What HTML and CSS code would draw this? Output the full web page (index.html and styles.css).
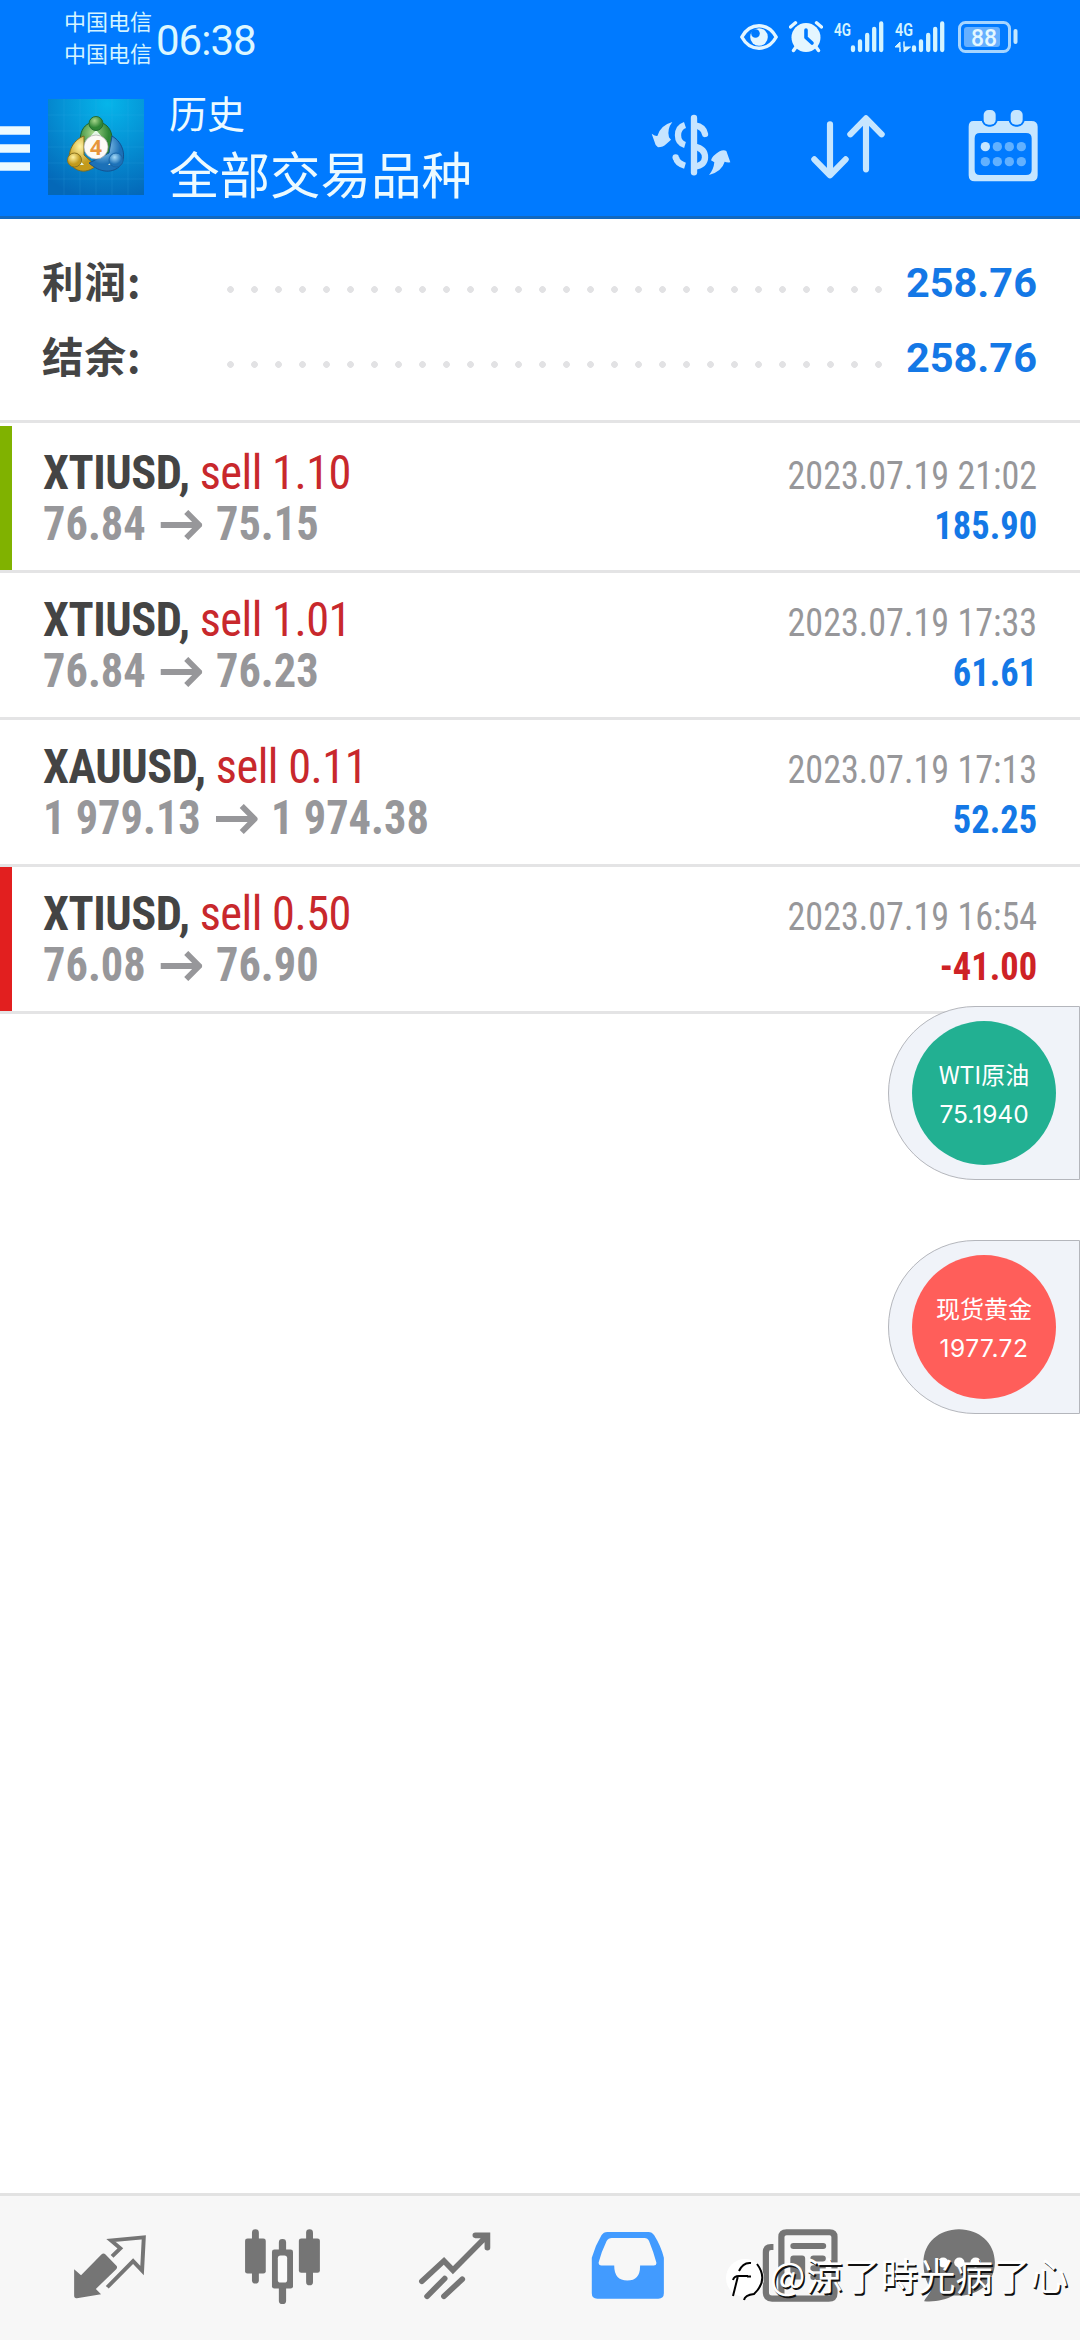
FILE: index.html
```html
<!DOCTYPE html>
<html lang="zh-CN">
<head>
<meta charset="utf-8">
<title>历史</title>
<link rel="stylesheet" href="styles.css">
</head>
<body>
<div class="app">
  <header class="header">
    <div class="status">
      <div class="carriers"><span>中国电信</span><span>中国电信</span></div>
      <div class="clock">06:38</div>
      <div class="status-icons">
        <svg class="eye" width="38" height="26" viewBox="0 0 38 26"><path d="M1.8 13C10-2 28-2 36.200 13C28 28 10 28 1.800 13Z" fill="none" stroke="#e4f6ff" stroke-width="3.400" stroke-linejoin="round"/><circle cx="19" cy="13" r="8.800" fill="#e4f6ff"/><circle cx="15.500" cy="9.500" r="4.300" fill="#007aff"/></svg>
        <svg class="alarm" width="34" height="32" viewBox="0 0 34 32"><circle cx="17" cy="16.500" r="14.500" fill="#e4f6ff"/><path d="M1.500 6L6.500 1.800M32.500 6L27.500 1.800M7 26L4.500 29.500M27 26l2.500 3.500" stroke="#e4f6ff" stroke-width="3.400" stroke-linecap="round"/><path d="M17 9v7.500l6 5.500" fill="none" stroke="#007aff" stroke-width="3.600" stroke-linecap="round" stroke-linejoin="round"/></svg>
        <svg class="signal" width="50" height="32" viewBox="0 0 50 32"><text class="net" x="0" y="14.500" textLength="17" lengthAdjust="spacingAndGlyphs">4G</text><path d="M19 26.500v2.500M26 20.500v8.500M33.200 14v15M40.200 7.800v21.200M47.200 2.500v26.500" stroke="#d4f4ff" stroke-width="4.300" stroke-linecap="round"/></svg>
        <svg class="signal" width="50" height="32" viewBox="0 0 50 32"><text class="net" x="0" y="14.500" textLength="18" lengthAdjust="spacingAndGlyphs">4G</text><path d="M5 31V21L0 26H5ZM9 20.500V31L15.500 26H9Z" fill="#d4f4ff" stroke="#d4f4ff" stroke-width="1"/><path d="M19 26.500v2.500M26 20.500v8.500M33.200 14v15M40.200 7.800v21.200M47.200 2.500v26.500" stroke="#d4f4ff" stroke-width="4.300" stroke-linecap="round"/></svg>
        <svg class="battery" width="60" height="32" viewBox="0 0 60 32"><rect x="1.500" y="1.500" width="50" height="29" rx="6" fill="none" stroke="#a6d5ff" stroke-width="3"/><rect x="6" y="6" width="36" height="20" rx="3" fill="#66b0ff"/><path d="M57.500 10v11" stroke="#c4e8ff" stroke-width="4" stroke-linecap="round"/><text class="level" x="13" y="25" textLength="26" lengthAdjust="spacingAndGlyphs">88</text></svg>
      </div>
    </div>
    <div class="toolbar">
      <svg class="menu" width="30" height="46" viewBox="0 0 30 46"><path d="M0 4.500h30M0 22.500h30M0 40.500h30" stroke="#ecfaff" stroke-width="8.500"/></svg>
      <svg class="logo" width="96" height="96" viewBox="0 0 96 96">
        <defs>
          <radialGradient id="bg" cx=".62" cy=".05" r="1"><stop offset="0" stop-color="#06b5ea"/><stop offset=".5" stop-color="#0590d4"/><stop offset="1" stop-color="#0468b8"/></radialGradient>
          <radialGradient id="gr" cx=".4" cy=".3"><stop offset="0" stop-color="#a5d68a"/><stop offset="1" stop-color="#2f8636"/></radialGradient>
          <radialGradient id="ye" cx=".4" cy=".3"><stop offset="0" stop-color="#fff2a0"/><stop offset="1" stop-color="#c39a1c"/></radialGradient>
          <radialGradient id="bl" cx=".4" cy=".3"><stop offset="0" stop-color="#a8dcf8"/><stop offset="1" stop-color="#1c71b8"/></radialGradient>
        </defs>
        <rect width="96" height="96" fill="url(#bg)"/>
        <path d="M16 0v96M32 0v96M48 0v96M64 0v96M80 0v96M0 16h96M0 32h96M0 48h96M0 64h96M0 80h96" stroke="#4cc0ee" stroke-opacity=".14"/>
        <path d="M33 49C30 33 36 23 48 23s19 10 15 27l-6 10-8-18z" fill="url(#gr)" stroke="#1c6430"/>
        <path d="M36 37C24 41 18 56 23 66c8 9 18 7 25 1L36 56z" fill="url(#ye)" stroke="#7e6c1e"/>
        <path d="M64 37c12 7 14 21 9 29-8 9-21 8-32-2l20-10z" fill="url(#bl)" stroke="#135190"/>
        <path d="M48 31l7 8H41zM28 57l8 9h-7zM69 57l-9 9 8-1z" fill="#e4f7e6"/>
        <circle cx="48" cy="24.500" r="7" fill="url(#gr)" stroke="#246c30"/>
        <circle cx="26.500" cy="61" r="7" fill="url(#ye)" stroke="#8a7420"/>
        <circle cx="68" cy="61" r="7" fill="url(#bl)" stroke="#1a65a6"/>
        <circle cx="48" cy="48" r="12" fill="#fcfaf7" stroke="#aaa" stroke-width=".7"/>
        <text class="logo-digit" x="48" y="56" text-anchor="middle">4</text>
      </svg>
      <div class="titles"><div class="title">历史</div><div class="subtitle">全部交易品种</div></div>
      <div class="actions">
        <svg class="act-currency" width="80" height="64" viewBox="30 26 240 192">
          <g fill="#c6e4ff"><path d="M94 50Q77 72 84 96L90 103Q86 107 75 117Q67 126 51 126L44 119L32 85Q43 93 49 92Q58 60 94 50Z"/><path d="M204 209Q218 193 220 171L210 165Q214 151 236 138Q248 132 256 137L268 171Q257 172 251 169Q243 198 204 209Z"/></g>
          <g fill="none" stroke="#c6e4ff" stroke-width="19"><path d="M132 59Q111 66 111 90Q111 113 132 119"/><path d="M105 157Q108 174 132 181"/><path d="M159 38V201" stroke-linecap="round"/><path d="M162 60Q188 64 192 86M160 124Q193 130 192 157Q191 180 160 184" stroke-linecap="round"/></g>
          <circle cx="104" cy="156" r="9.500" fill="#c6e4ff"/>
        </svg>
        <svg class="act-sort" width="74" height="66" viewBox="627 341 222 198"><path d="M684 372V522M637 477L684 525L731 477M792 507V356M745 402L792 354L839 402" fill="none" stroke="#c6e6ff" stroke-width="18.500" stroke-linecap="round" stroke-linejoin="round"/></svg>
        <svg class="act-calendar" width="70" height="73" viewBox="1102 327 210 219"><path fill-rule="evenodd" d="M1118 363h174q19 0 19 17v146q0 18-19 18h-170q-18 0-18-18V380q0-17 14-17zM1138 399q-16 0-16 16v94q0 16 16 16h138q17 0 17-16v-94q0-16-17-16z" fill="#c6e6ff"/><rect x="1149" y="330" width="36" height="44" rx="15" fill="#c6e6ff" stroke="#007aff" stroke-width="12" paint-order="stroke"/><rect x="1230" y="330" width="36" height="44" rx="15" fill="#c6e6ff" stroke="#007aff" stroke-width="12" paint-order="stroke"/><g fill="#62b1ff"><circle cx="1154" cy="440" r="14" fill="#c6e6ff"/><circle cx="1190" cy="440" r="14"/><circle cx="1226" cy="440" r="14"/><circle cx="1262" cy="440" r="14"/><circle cx="1154" cy="485" r="14"/><circle cx="1190" cy="485" r="14"/><circle cx="1226" cy="485" r="14"/><circle cx="1262" cy="485" r="14"/></g></svg>
      </div>
    </div>
  </header>

  <section class="summary">
    <div class="sum-row"><span class="sum-label">利润:</span><span class="dots"></span><span class="sum-value">258.76</span></div>
    <div class="sum-row"><span class="sum-label">结余:</span><span class="dots"></span><span class="sum-value">258.76</span></div>
  </section>

  <main class="deals">
    <article class="deal deal-first take">
      <div class="left"><div class="name"><b>XTIUSD,</b> <span>sell 1.10</span></div><div class="prices">76.84<svg class="arrow" width="45" height="30" viewBox="0 0 42 30" preserveAspectRatio="none"><path d="M0 15H38M26 2L39 15L26 28" fill="none" stroke="#97979a" stroke-width="5.800"/></svg>75.15</div></div>
      <div class="right"><div class="date">2023.07.19 21:02</div><div class="profit">185.90</div></div>
    </article>
    <article class="deal">
      <div class="left"><div class="name"><b>XTIUSD,</b> <span>sell 1.01</span></div><div class="prices">76.84<svg class="arrow" width="45" height="30" viewBox="0 0 42 30" preserveAspectRatio="none"><path d="M0 15H38M26 2L39 15L26 28" fill="none" stroke="#97979a" stroke-width="5.800"/></svg>76.23</div></div>
      <div class="right"><div class="date">2023.07.19 17:33</div><div class="profit">61.61</div></div>
    </article>
    <article class="deal">
      <div class="left"><div class="name"><b>XAUUSD,</b> <span>sell 0.11</span></div><div class="prices">1 979.13<svg class="arrow" width="45" height="30" viewBox="0 0 42 30" preserveAspectRatio="none"><path d="M0 15H38M26 2L39 15L26 28" fill="none" stroke="#97979a" stroke-width="5.800"/></svg>1 974.38</div></div>
      <div class="right"><div class="date">2023.07.19 17:13</div><div class="profit">52.25</div></div>
    </article>
    <article class="deal stop">
      <div class="left"><div class="name"><b>XTIUSD,</b> <span>sell 0.50</span></div><div class="prices">76.08<svg class="arrow" width="45" height="30" viewBox="0 0 42 30" preserveAspectRatio="none"><path d="M0 15H38M26 2L39 15L26 28" fill="none" stroke="#97979a" stroke-width="5.800"/></svg>76.90</div></div>
      <div class="right"><div class="date">2023.07.19 16:54</div><div class="profit loss">-41.00</div></div>
    </article>
  </main>

  <nav class="nav">
    <svg width="80" height="79" viewBox="204 140 232 236" preserveAspectRatio="none"><path d="M216 266L236 284L295 222q6-6 12 0l31 33q5 5 0 11L279 325L294 341L224 353q-8 1-8-8z" fill="#757575"/><path d="M326 228L350 204L323 180L418 171L413 270L387 242L312 320" fill="none" stroke="#757575" stroke-width="11.500"/></svg>
    <svg width="80" height="79" viewBox="703 140 232 236" preserveAspectRatio="none"><g fill="#757575"><rect x="729" y="147" width="20" height="162" rx="10"/><rect x="709" y="174" width="60" height="105" rx="7"/><rect x="886" y="147" width="20" height="167" rx="10"/><rect x="865" y="174" width="61" height="103" rx="7"/><rect x="807" y="176" width="21" height="194" rx="10"/><rect x="787" y="207" width="61" height="117" rx="7"/></g><rect x="804" y="225" width="27" height="81" rx="8" fill="#fafafa"/></svg>
    <svg width="80" height="79" viewBox="1201 140 232 236" preserveAspectRatio="none"><path d="M1221 302L1285 241L1311 269L1406 170M1376 165H1411V202M1236 347L1287 294M1285 347L1338 296" fill="none" stroke="#757575" stroke-width="16.500" stroke-linecap="round" stroke-linejoin="miter"/></svg>
    <svg width="80" height="79" viewBox="136 140 232 236" preserveAspectRatio="none"><path fill-rule="evenodd" d="M192 155h119q11 0 17 10 20 33 28 67v106q0 16-16 16H163q-16 0-16-16V232q10-36 28-67 6-10 17-10zM205 173q-10 0-15 9-15 32-23 63-1 10 8 10h37q0 45 38 45t37-45h40q9 0 7-10-8-30-21-63-4-9-13-9z" fill="#429bff"/></svg>
    <svg width="80" height="79" viewBox="638 140 232 236" preserveAspectRatio="none"><path d="M677 200h-7q-15 0-15 16v120q0 18 18 18h164q17 0 17-17V170q0-14-14-14H715q-15 0-15 14v184" fill="none" stroke="#757575" stroke-width="18"/><path d="M735 197h86M793 234h27M793 263h27M793 289h27" stroke="#757575" stroke-width="18" stroke-linecap="round"/><rect x="726" y="225" width="43" height="72" rx="9" fill="#757575"/></svg>
    <svg class="chat" width="80" height="79" viewBox="1097 140 232 236" preserveAspectRatio="none"><path d="M1213 147c58 0 104 41 104 99s-46 99-104 99h-16c-22 13-54 20-85 17 0-6 18-22 20-36-14-21-22-47-22-80 0-58 45-99 103-99z" fill="#757575"/><g fill="#fff"><circle cx="1167" cy="246" r="15"/><circle cx="1214" cy="246" r="15"/><circle cx="1261" cy="246" r="15"/></g></svg>
  </nav>

  <aside class="quote quote-oil"><div class="bubble up"><span class="q-name">WTI原油</span><span class="q-price">75.1940</span></div></aside>
  <aside class="quote quote-gold"><div class="bubble down"><span class="q-name">现货黄金</span><span class="q-price q-wide">1977.72</span></div></aside>
  <div class="watermark">
    <svg width="42" height="44" viewBox="0 0 42 44"><circle cx="20" cy="20" r="19" fill="#fff"/><path d="M8 38l5-20M8 22q1-4 6-4h9M14 13q4-9 12-8M32 6q12 16-3 30-9 1-10 6M22 18.500h4" fill="none" stroke="#000" stroke-width="2"/></svg>
    <span>@涼了時光病了心</span>
  </div>
</div>
</body>
</html>
```
FILE: styles.css
```css
* { box-sizing: border-box; }
body { margin: 0; background: #fff; font-family: Roboto, "Noto Sans CJK SC", sans-serif; }
svg { display: block; flex: none; }
.app { position: relative; width: 1080px; height: 2340px; display: flex; flex-direction: column; overflow: hidden; background: #fff; }

.header { height: 219px; background: #007aff; border-bottom: 3px solid #1269c0; color: #ecfaff; }
.status { height: 78px; display: flex; padding: 0 62px 0 64px; }
.carriers { display: flex; flex-direction: column; padding-top: 5px; font: 22px/31.500px "Noto Sans CJK SC", sans-serif; color: #d4f4ff; width: 92px; }
.clock { padding-top: 16px; font-size: 42px; font-weight: 450; line-height: 50px; letter-spacing: -1px; font-stretch: 91%; color: #dcf7ff; }
.status-icons { margin-left: auto; display: flex; padding-top: 21px; }
.eye { margin: 3px 11px 0 0; }
.alarm { margin-right: 11px; }
.signal { margin-right: 11px; overflow: visible; }
.battery { margin-left: 2px; }
.net { font: 600 18.500px Roboto, sans-serif; fill: #d4f4ff; }
.level { font: 500 24px Roboto, sans-serif; fill: #e4f8ff; }
.toolbar { display: flex; height: 138px; }
.menu { margin-top: 48px; }
.logo { margin: 21px 0 0 18px; }
.logo-digit { font: 700 21px "Open Sans", sans-serif; fill: #e6953c; }
.titles { margin-left: 25px; padding-top: 7px; font-family: "Noto Sans CJK SC", sans-serif; }
.title { font-size: 38px; line-height: 54px; }
.subtitle { font-size: 50.5px; line-height: 66px; }
.actions { display: flex; margin-left: auto; padding: 31px 42px 0 0; }
.act-currency { margin: 5px 80px 0 0; }
.act-sort { margin: 5px 83px 0 0; }

.summary { height: 204px; padding: 26px 43px 0 42px; border-bottom: 3px solid #e4e4e5; }
.sum-row { display: flex; align-items: center; height: 75px; }
.sum-label { width: 185px; padding-bottom: 5px; font: 700 41.500px/75px "Noto Sans CJK SC", sans-serif; letter-spacing: 1px; color: #444; }
.dots { width: 655px; height: 7px; margin-top: 14px; background: radial-gradient(circle at 3.500px 3.500px, #e2e2e4 3px, transparent 3.700px) 0 0 / 24px 7px repeat-x; }
.sum-value { margin-left: auto; font-weight: 700; font-size: 41.5px; color: #1478e6; }

.deal { display: flex; justify-content: space-between; height: 147px; padding: 21px 43px 0; border-bottom: 3px solid #e4e4e5; font-stretch: 75%; }
.take { box-shadow: inset 12px 0 #80b200; }
.stop { box-shadow: inset 12px 0 #e21f1f; }
.deal-first { margin-top: 3px; }
.name, .prices { transform-origin: left center; }
.name { font-size: 48px; line-height: 51px; letter-spacing: -.5px; color: #c8282c; transform: scaleX(.966); }
.name b { color: #444; }
.prices { display: flex; align-items: center; font-size: 48px; line-height: 51px; font-weight: 700; color: #97979a; transform: scaleX(.925); }
.arrow { margin: 2px 15px 0 16px; }
.right { text-align: right; padding-top: 3px; }
.date, .profit { transform-origin: right center; }
.date { font-size: 39.500px; line-height: 51px; color: #97979a; transform: scaleX(.914); }
.profit { font-size: 39px; line-height: 51px; font-weight: 700; color: #1478e6; transform: scaleX(.935); }
.loss { color: #ce2225; }

.nav { margin-top: auto; height: 147px; display: flex; gap: 92.500px; padding: 31px 0 0 70px; background: #f7f7f7; border-top: 3px solid #e2e2e2; }
.chat { margin-left: -14px; }

.quote { position: absolute; right: 0; width: 192px; height: 174px; padding: 14px 0 0 23px; border: 1px solid #b4b6bc; border-radius: 87px 0 0 87px; background: #f0f3f9; }
.quote-oil { top: 1006px; }
.quote-gold { top: 1240px; }
.bubble { width: 144px; height: 144px; border-radius: 50%; display: flex; flex-direction: column; align-items: center; padding-top: 34px; color: #fff; }
.up { background: #22b092; }
.down { background: #ff5e5a; }
.q-name { font: 24px/38px "Noto Sans CJK SC", sans-serif; }
.q-price { font: 24.500px/42px Inter, Roboto, sans-serif; }
.q-wide { letter-spacing: .5px; }

.watermark { position: absolute; left: 725px; top: 2258px; display: flex; font: 37.500px/40px "Noto Sans CJK TC", sans-serif; color: #fff; white-space: nowrap; }
.watermark span { margin: -4px 0 0 3px; text-shadow: 1.500px 1.500px 0 #111; }
```
